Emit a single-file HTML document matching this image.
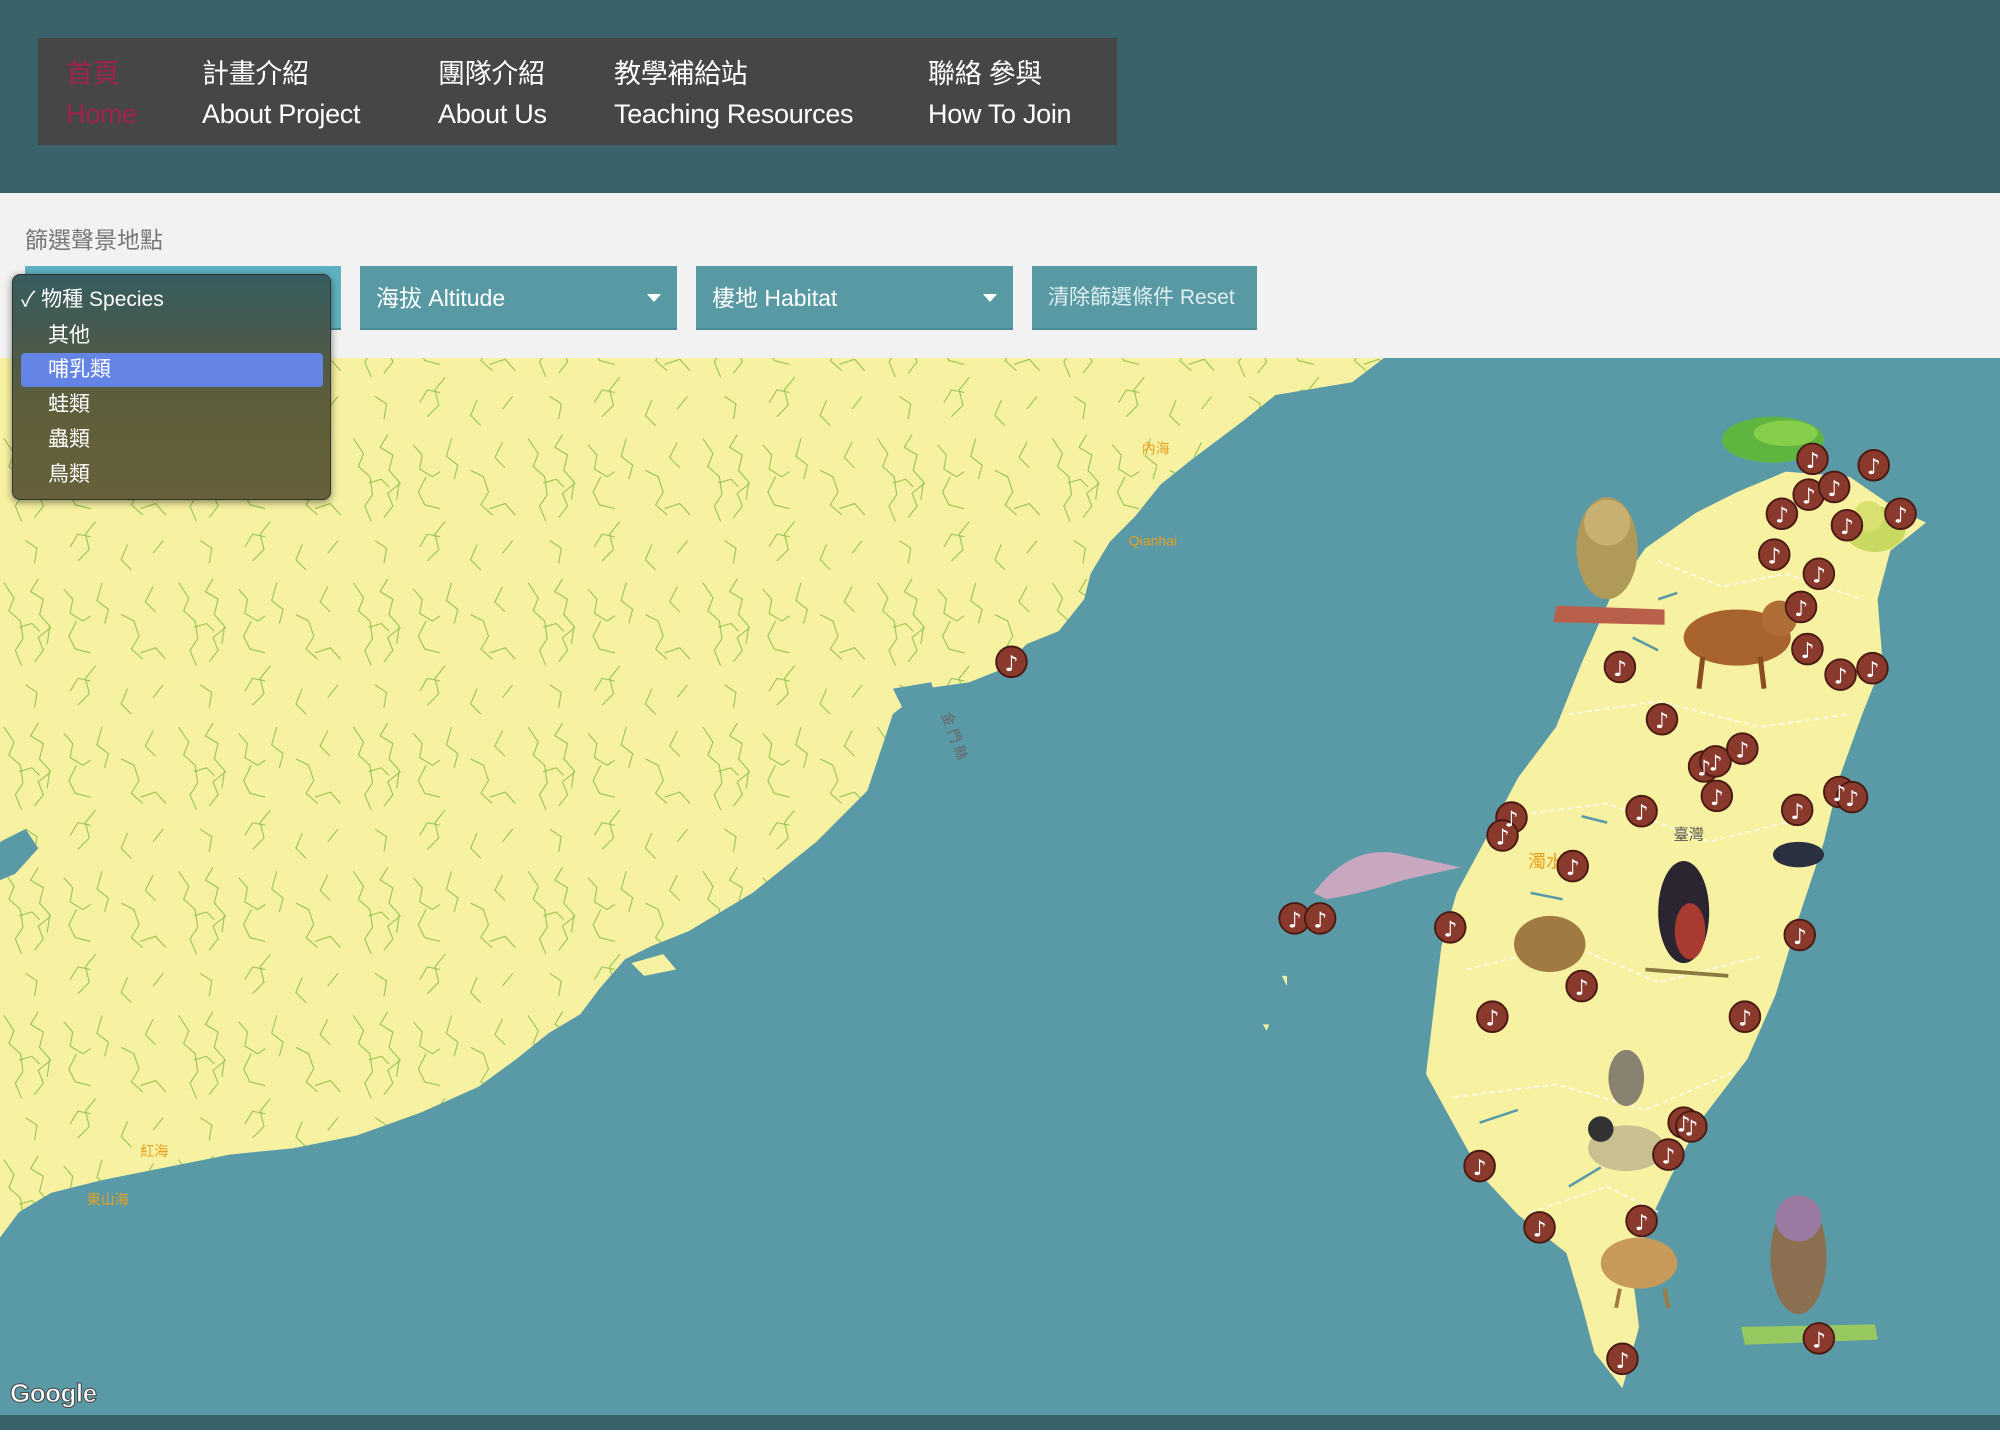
<!DOCTYPE html>
<html><head><meta charset="utf-8">
<style>
*{margin:0;padding:0;box-sizing:border-box}
body{width:2000px;height:1446px;overflow:hidden;background:#fff;font-family:"Liberation Sans","Noto Sans CJK TC",sans-serif;position:relative}
#hdr{position:absolute;left:0;top:0;width:2000px;height:193px;background:#3a626a}
#nav{position:absolute;left:38px;top:38px;width:1079px;height:107px;background:#464646}
.ni{position:absolute;top:16px;color:#fff;font-size:27px;line-height:40px;white-space:nowrap;letter-spacing:-0.3px}
#filt{position:absolute;left:0;top:193px;width:2000px;height:165px;background:#f2f2f2}
#ttl{position:absolute;left:25px;top:221px;font-size:23px;color:#777}
.btn{position:absolute;top:266px;height:64px;background:#5899a4;color:#fff;font-size:23px;line-height:64px;padding-left:16px;border-bottom:2px solid #4d8b96;white-space:nowrap;overflow:hidden}
.btn .ar{position:absolute;right:16px;top:28px;width:0;height:0;border-left:7px solid transparent;border-right:7px solid transparent;border-top:8px solid #fff}
#menu{position:absolute;left:12px;top:274px;width:319px;height:226px;border-radius:8px;background:linear-gradient(#365c60,#4a5a4a 30%,#5f5e3a 60%,#66613a);box-shadow:0 2px 8px rgba(0,0,0,.5);border:1px solid #333}
.mi{position:absolute;left:35px;color:#fff;font-size:21px;line-height:34px}
#map{position:absolute;left:0;top:358px;width:2000px;height:1057px}
#strip{position:absolute;left:0;top:1415px;width:2000px;height:15px;background:#3a626a}
#g{position:absolute;left:10px;top:1378px;font-size:26px;color:#fff;font-weight:bold;-webkit-text-stroke:1px #444;letter-spacing:-0.5px}
</style></head><body>
<div id="hdr"><div id="nav">
<div class="ni" style="left:28px;color:#a2224f">首頁<br>Home</div>
<div class="ni" style="left:164px">計畫介紹<br>About Project</div>
<div class="ni" style="left:400px">團隊介紹<br>About Us</div>
<div class="ni" style="left:576px">教學補給站<br>Teaching Resources</div>
<div class="ni" style="left:890px">聯絡 參與<br>How To Join</div>
</div></div>
<div id="filt"></div>
<div id="ttl">篩選聲景地點</div>
<div class="btn" style="left:25px;width:316px;background:#5fb2c0"></div>
<div class="btn" style="left:360px;width:317px">海拔 Altitude<span class="ar"></span></div>
<div class="btn" style="left:696px;width:317px">棲地 Habitat<span class="ar"></span></div>
<div class="btn" style="left:1032px;width:225px;color:#dfeff1;font-size:21px">清除篩選條件 Reset</div>

<svg id="map" viewBox="0 281 1568 828" preserveAspectRatio="none" xmlns="http://www.w3.org/2000/svg">
<defs>
<pattern id="riv" width="137" height="113" patternUnits="userSpaceOnUse">
<path d="M3 5 l8 12 l-4 10 l9 8 l2 14 l-6 9 l5 12 M30 2 l-6 10 l10 6 l-3 12 l8 9 l-2 14 M50 10 l7 8 l-2 11 l10 6 l6 -4 M40 40 l-10 8 l4 10 l-7 9 M60 35 l-6 12 l5 10 l12 3 M15 40 l10 -3 l6 6 M80 5 l-4 14 l9 7 l-3 11 M95 30 l10 5 l4 12 l-6 10 l9 8 M120 8 l-6 12 l8 8 M110 60 l12 -4 l8 9 M75 70 l-8 10 l3 12 l-9 9 M20 85 l9 6 l-2 12 M55 90 l6 -10 l10 2 M100 88 l-5 12 l8 8 M128 85 l-8 10" stroke="#8fbf4a" stroke-width="0.8" fill="none"/>
</pattern>
</defs>
<rect x="0" y="281" width="1568" height="828" fill="#5a9aa6"/>
<path d="M0 281 L1085 281 L1060 300 L1000 310 L975 330 L955 345 L935 360 L910 380 L890 405 L870 425 L855 450 L850 470 L830 495 L805 505 L785 525 L760 535 L725 540 L700 560 L690 590 L680 620 L660 640 L640 660 L615 680 L590 700 L565 715 L540 730 L510 742 L490 752 L470 775 L455 795 L430 810 L405 830 L375 852 L330 872 L280 890 L230 900 L180 905 L130 915 L80 925 L40 935 L15 950 L0 970 Z" fill="#f7f2a2"/>
<path d="M0 281 L1085 281 L1060 300 L1000 310 L975 330 L955 345 L935 360 L910 380 L890 405 L870 425 L855 450 L850 470 L830 495 L805 505 L785 525 L760 535 L725 540 L700 560 L690 590 L680 620 L660 640 L640 660 L615 680 L590 700 L565 715 L540 730 L510 742 L490 752 L470 775 L455 795 L430 810 L405 830 L375 852 L330 872 L280 890 L230 900 L180 905 L130 915 L80 925 L40 935 L15 950 L0 970 Z" fill="url(#riv)"/>
<path d="M0 660 L20 650 L30 665 L12 685 L0 690 Z M700 540 L730 535 L735 550 L710 560 Z" fill="#5a9aa6"/>
<path d="M495 755 L520 748 L530 760 L505 765 Z M1005 765 l4 0 l0 8 Z M990 803 l5 0 l-2 5 Z" fill="#f7f2a2"/>
<text x="895" y="356" font-size="11" fill="#e8a020">內海</text>
<text x="885" y="428" font-size="11" fill="#e8a020">Qianhai</text>
<text x="110" y="906" font-size="11" fill="#e8a020">紅海</text>
<text x="68" y="944" font-size="11" fill="#e8a020">東山海</text>
<text x="738" y="560" font-size="11" fill="#666" transform="rotate(70 738 560)">金 門 縣</text>
<path d="M1400 370 L1450 374 L1485 398 L1510 410 L1482 432 L1472 470 L1476 520 L1460 560 L1442 610 L1430 660 L1410 720 L1392 780 L1370 830 L1332 880 L1310 922 L1292 960 L1280 1000 L1285 1040 L1272 1088 L1250 1060 L1240 1022 L1228 982 L1190 952 L1162 922 L1140 882 L1118 842 L1124 792 L1130 742 L1142 700 L1168 652 L1190 610 L1220 570 L1240 520 L1262 470 L1290 430 L1330 402 L1362 386 Z" fill="#f7f2a2"/>
<g stroke="#fff" stroke-width="1.2" stroke-dasharray="4 3" fill="none" opacity="0.9">
<path d="M1300 440 L1350 460 L1400 450 L1460 470 M1230 560 L1300 550 L1380 570 L1450 560 M1180 640 L1260 630 L1340 660 L1420 640 M1150 760 L1230 740 L1300 770 L1380 750 M1140 860 L1220 850 L1290 870 L1360 840 M1200 950 L1260 930 L1300 950"/>
</g>
<g stroke="#5a9aa6" stroke-width="2" fill="none">
<path d="M1280 500 l20 10 M1300 470 l15 -5 M1240 640 l20 5 M1200 700 l25 5 M1160 880 l30 -10 M1230 930 l25 -15 M1410 720 l-5 20"/>
</g>
<text x="1312" y="658" font-size="12" fill="#555">臺灣</text>
<text x="1198" y="680" font-size="14" fill="#e8a020">濁水</text>
<ellipse cx="1390" cy="345" rx="40" ry="18" fill="#5fb540"/><ellipse cx="1400" cy="340" rx="25" ry="10" fill="#86cf4a"/>
<ellipse cx="1260" cy="430" rx="24" ry="40" fill="#b09a5a"/><circle cx="1260" cy="410" r="18" fill="#c8b070"/><path d="M1220 475 L1305 478 L1305 490 L1218 488 Z" fill="#b8604a"/>
<ellipse cx="1362" cy="500" rx="42" ry="22" fill="#a8642c"/><circle cx="1395" cy="485" r="14" fill="#b06e36"/><path d="M1335 515 l-3 25 M1380 515 l3 25" stroke="#8a4e20" stroke-width="4"/>
<ellipse cx="1470" cy="415" rx="24" ry="18" fill="#c8d860"/><circle cx="1465" cy="405" r="12" fill="#d8e070"/>
<path d="M1030 700 Q1060 660 1100 670 L1145 680 L1100 690 Q1070 700 1040 705 Z" fill="#c8a8c0"/>
<ellipse cx="1320" cy="715" rx="20" ry="40" fill="#2a2530"/><ellipse cx="1325" cy="730" rx="12" ry="22" fill="#a83a30"/><path d="M1290 760 l65 5" stroke="#8a7a40" stroke-width="3"/>
<ellipse cx="1410" cy="670" rx="20" ry="10" fill="#2a3040"/>
<ellipse cx="1215" cy="740" rx="28" ry="22" fill="#a07a40"/>
<ellipse cx="1275" cy="845" rx="14" ry="22" fill="#8a8270"/>
<ellipse cx="1275" cy="900" rx="30" ry="18" fill="#c8c090"/><circle cx="1255" cy="885" r="10" fill="#333"/>
<ellipse cx="1285" cy="990" rx="30" ry="20" fill="#c89a5a"/><path d="M1270 1010 l-3 15 M1305 1010 l3 15" stroke="#a07a40" stroke-width="3"/>
<ellipse cx="1410" cy="985" rx="22" ry="45" fill="#8a7050"/><circle cx="1410" cy="955" r="18" fill="#9a7aa0"/><path d="M1365 1040 L1470 1038 L1472 1050 L1368 1054 Z" fill="#98c860"/>
<g fill="#8a3a2c" stroke="#4a1a12" stroke-width="1.5">
<circle cx="793" cy="519" r="12"/><circle cx="1015" cy="720" r="12"/><circle cx="1035" cy="720" r="12"/><circle cx="1421" cy="360" r="12"/><circle cx="1469" cy="365" r="12"/><circle cx="1418" cy="388" r="12"/><circle cx="1438" cy="382" r="12"/><circle cx="1397" cy="403" r="12"/><circle cx="1490" cy="403" r="12"/><circle cx="1448" cy="412" r="12"/><circle cx="1391" cy="435" r="12"/><circle cx="1426" cy="450" r="12"/><circle cx="1412" cy="476" r="12"/><circle cx="1270" cy="523" r="12"/><circle cx="1417" cy="509" r="12"/><circle cx="1443" cy="529" r="12"/><circle cx="1468" cy="524" r="12"/><circle cx="1303" cy="564" r="12"/><circle cx="1336" cy="601" r="12"/><circle cx="1345" cy="597" r="12"/><circle cx="1366" cy="587" r="12"/><circle cx="1346" cy="624" r="12"/><circle cx="1287" cy="636" r="12"/><circle cx="1409" cy="635" r="12"/><circle cx="1442" cy="621" r="12"/><circle cx="1452" cy="625" r="12"/><circle cx="1185" cy="641" r="12"/><circle cx="1178" cy="655" r="12"/><circle cx="1233" cy="679" r="12"/><circle cx="1137" cy="727" r="12"/><circle cx="1411" cy="733" r="12"/><circle cx="1240" cy="773" r="12"/><circle cx="1170" cy="797" r="12"/><circle cx="1368" cy="797" r="12"/><circle cx="1320" cy="880" r="12"/><circle cx="1326" cy="883" r="12"/><circle cx="1308" cy="905" r="12"/><circle cx="1160" cy="914" r="12"/><circle cx="1207" cy="962" r="12"/><circle cx="1287" cy="957" r="12"/><circle cx="1272" cy="1065" r="12"/><circle cx="1426" cy="1049" r="12"/>
</g>
<g fill="#fff" font-size="17" text-anchor="middle" font-family="DejaVu Sans">
<text x="793" y="526">♪</text><text x="1015" y="727">♪</text><text x="1035" y="727">♪</text><text x="1421" y="367">♪</text><text x="1469" y="372">♪</text><text x="1418" y="395">♪</text><text x="1438" y="389">♪</text><text x="1397" y="410">♪</text><text x="1490" y="410">♪</text><text x="1448" y="419">♪</text><text x="1391" y="442">♪</text><text x="1426" y="457">♪</text><text x="1412" y="483">♪</text><text x="1270" y="530">♪</text><text x="1417" y="516">♪</text><text x="1443" y="536">♪</text><text x="1468" y="531">♪</text><text x="1303" y="571">♪</text><text x="1336" y="608">♪</text><text x="1345" y="604">♪</text><text x="1366" y="594">♪</text><text x="1346" y="631">♪</text><text x="1287" y="643">♪</text><text x="1409" y="642">♪</text><text x="1442" y="628">♪</text><text x="1452" y="632">♪</text><text x="1185" y="648">♪</text><text x="1178" y="662">♪</text><text x="1233" y="686">♪</text><text x="1137" y="734">♪</text><text x="1411" y="740">♪</text><text x="1240" y="780">♪</text><text x="1170" y="804">♪</text><text x="1368" y="804">♪</text><text x="1320" y="887">♪</text><text x="1326" y="890">♪</text><text x="1308" y="912">♪</text><text x="1160" y="921">♪</text><text x="1207" y="969">♪</text><text x="1287" y="964">♪</text><text x="1272" y="1072">♪</text><text x="1426" y="1056">♪</text>
</g>
</svg>
<div id="strip"></div>
<div id="g">Google</div>

<div id="menu">
<div class="mi" style="left:8px;top:8px">✓ 物種 Species</div>
<div class="mi" style="top:44px">其他</div>
<div style="position:absolute;left:8px;top:78px;width:302px;height:34px;background:#6585e6;border-radius:4px"></div>
<div class="mi" style="top:78px">哺乳類</div>
<div class="mi" style="top:113px">蛙類</div>
<div class="mi" style="top:148px">蟲類</div>
<div class="mi" style="top:183px">鳥類</div>
</div>
</body></html>
